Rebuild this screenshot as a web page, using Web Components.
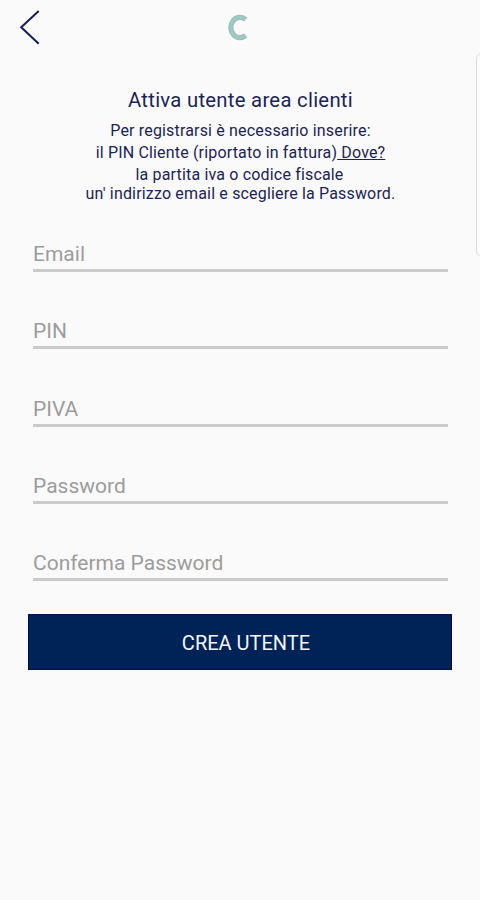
<!DOCTYPE html>
<html lang="it">
<head>
<meta charset="utf-8">
<title>Attiva utente area clienti</title>
<style>
  body {
    margin: 0;
    background: #fafafa;
    font-family: Roboto, "Liberation Sans", sans-serif;
    color: #1b2456;
  }
</style>
</head>
<body>
<activation-screen>
  <top-bar slot="header"></top-bar>
  <intro-text slot="intro">
    <span slot="title">Attiva utente area clienti</span>
    <intro-line>Per registrarsi è necessario inserire:</intro-line>
    <intro-line>il PIN Cliente (riportato in fattura)<u>&nbsp;Dove?</u></intro-line>
    <intro-line style="--line: 19px; --nudge: -2px">la partita iva o codice fiscale</intro-line>
    <intro-line style="--line: 20px">un' indirizzo email e scegliere la Password.</intro-line>
  </intro-text>
  <form-field>Email</form-field>
  <form-field>PIN</form-field>
  <form-field>PIVA</form-field>
  <form-field>Password</form-field>
  <form-field>Conferma Password</form-field>
  <submit-button slot="action">CREA UTENTE</submit-button>
  <edge-panel slot="edge"></edge-panel>
</activation-screen>

<script>
class ActivationScreen extends HTMLElement {
  constructor() {
    super();
    const shadow = this.attachShadow({ mode: "open" });
    shadow.innerHTML = `
      <style>
        :host { display: block; position: relative; width: 480px; height: 900px; overflow: hidden; }
        .fields { display: flex; flex-direction: column; gap: 45.33px; padding: 37px 32px 0 33px; }
        .action { padding: 32.7px 28px 0 28px; }
      </style>
      <slot name="header"></slot>
      <slot name="intro"></slot>
      <div class="fields"><slot></slot></div>
      <div class="action"><slot name="action"></slot></div>
      <slot name="edge"></slot>
    `;
  }
}

class TopBar extends HTMLElement {
  constructor() {
    super();
    const shadow = this.attachShadow({ mode: "open" });
    shadow.innerHTML = `
      <style>
        :host { display: grid; grid-template-columns: 1fr auto 1fr; height: 56px; }
        svg { display: block; }
      </style>
      <svg width="60" height="56" role="img" aria-label="Indietro">
        <path d="M38.7 11 L21.2 27.3 L38.7 43.8" fill="none" stroke="#161c59" stroke-width="2"/>
      </svg>
      <svg width="40" height="56" role="img" aria-label="Logo">
        <path d="M25.6 19.4 A9.2 10.2 0 1 0 25.6 35.6" fill="none" stroke="#a9b5b2" stroke-width="5.2"/>
        <path d="M25.4 19.4 A9.2 10.2 0 1 0 25.4 35.6" fill="none" stroke="#98cbc1" stroke-width="3.4"/>
      </svg>
    `;
  }
}

class IntroText extends HTMLElement {
  constructor() {
    super();
    const shadow = this.attachShadow({ mode: "open" });
    shadow.innerHTML = `
      <style>
        :host { display: block; padding: 32px 0 0 1px; text-align: center; }
        h1 { margin: 0 0 8px; font-size: 20.3px; font-weight: 400; line-height: 24px; letter-spacing: 0.28px; }
      </style>
      <h1><slot name="title"></slot></h1>
      <slot></slot>
    `;
  }
}

class IntroLine extends HTMLElement {
  constructor() {
    super();
    const shadow = this.attachShadow({ mode: "open" });
    shadow.innerHTML = `
      <style>
        :host {
          display: block;
          height: var(--line, 22px);
          margin-left: var(--nudge, 0);
          font-size: 16px;
          line-height: 22px;
          letter-spacing: 0.17px;
          white-space: nowrap;
        }
      </style>
      <slot></slot>
    `;
  }
}

class FormField extends HTMLElement {
  constructor() {
    super();
    const shadow = this.attachShadow({ mode: "open" });
    shadow.innerHTML = `
      <style>
        :host {
          display: block;
          box-sizing: border-box;
          height: 32px;
          border-bottom: 3px solid #c9cac9;
          color: #9c9c9c;
          font-size: 21px;
          line-height: 28px;
        }
      </style>
      <label><slot></slot></label>
    `;
  }
}

class SubmitButton extends HTMLElement {
  constructor() {
    super();
    const shadow = this.attachShadow({ mode: "open" });
    shadow.innerHTML = `
      <style>
        :host { display: block; }
        button {
          display: block;
          width: 100%;
          height: 56px;
          padding: 1px 0 0 12px;
          border: 1px solid #080d4c;
          background: #002357;
          color: #f4f5fa;
          font: inherit;
          font-size: 20px;
        }
      </style>
      <button type="button"><slot></slot></button>
    `;
  }
}

// Edge handle that hangs over the right side of the screen
class EdgePanel extends HTMLElement {
  constructor() {
    super();
    const shadow = this.attachShadow({ mode: "open" });
    shadow.innerHTML = `
      <style>
        :host {
          position: absolute;
          top: 53px;
          right: -8px;
          width: 12px;
          height: 204px;
          box-sizing: border-box;
          border: 1.5px solid #dcdcdc;
          border-radius: 6px;
          background: #fdfdfd;
        }
      </style>
    `;
  }
}

customElements.define("activation-screen", ActivationScreen);
customElements.define("top-bar", TopBar);
customElements.define("intro-text", IntroText);
customElements.define("intro-line", IntroLine);
customElements.define("form-field", FormField);
customElements.define("submit-button", SubmitButton);
customElements.define("edge-panel", EdgePanel);
</script>
</body>
</html>
